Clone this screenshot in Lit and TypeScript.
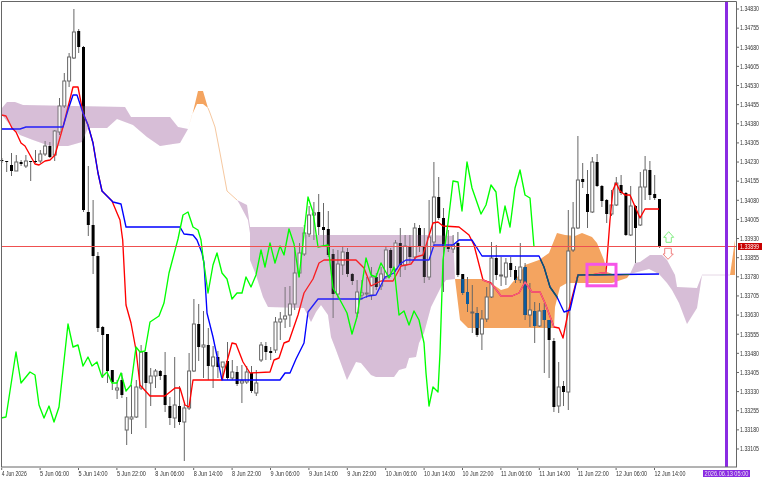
import { LitElement, html, svg, css } from "lit";
import { customElement } from "lit/decorators.js";

type C = [number, number, number, number, number];
const candles: C[] = [
[158,160,161,163,0],[161,161,162,172,0],[153,165,171,176,0],[155,162,171,171,1],[160,162,164,166,0],[155,161,166,168,1],[161,161,162,181,0],[150,161,162,163,0],
[150,154,161,163,1],[141,146,154,156,1],[142,146,157,158,0],[130,131,155,161,1],[98,106,132,135,1],[73,81,106,108,1],[53,57,81,87,1],[9,32,58,59,1],
[29,31,47,53,0],[46,47,210,212,0],[166,212,225,236,0],[200,225,256,274,0],[252,256,328,332,0],[326,327,335,378,0],[334,334,371,383,0],[370,370,382,390,0],
[380,388,390,399,1],[373,380,395,398,0],[397,417,430,445,1],[385,417,419,434,1],[380,387,417,418,1],[345,352,388,390,1],[352,352,383,428,0],[368,376,383,406,1],
[369,371,376,388,1],[370,371,376,380,0],[352,375,405,412,0],[397,406,418,425,0],[357,405,418,428,1],[386,406,422,425,0],[404,408,422,461,1],[353,371,408,410,1],
[299,324,371,372,1],[304,324,347,361,0],[311,345,347,378,1],[328,345,366,380,0],[346,357,366,388,1],[351,357,367,378,0],[362,362,367,380,1],[342,361,378,380,0],
[360,372,378,380,1],[366,372,384,386,0],[365,381,383,403,1],[366,372,382,384,1],[366,373,391,393,0],[370,383,393,396,1],[342,345,360,362,1],[342,346,352,360,0],
[347,351,353,360,0],[317,322,350,353,1],[312,319,322,340,1],[287,316,319,328,1],[286,304,315,327,1],[248,273,304,310,1],[243,253,273,277,1],[225,233,254,256,1],
[206,215,234,237,1],[202,213,215,240,1],[194,212,227,235,0],[203,227,230,247,0],[211,229,255,257,0],[249,254,294,318,0],[250,264,294,298,1],[246,252,265,275,1],
[248,252,274,277,0],[273,274,281,285,0],[280,292,313,317,1],[280,293,295,300,1],[277,293,294,298,1],[267,277,295,300,1],[273,277,287,290,0],[267,274,286,290,1],
[246,250,277,279,1],[248,250,268,277,0],[240,243,269,272,1],[228,243,265,277,0],[235,246,265,270,1],[235,246,257,263,0],[223,228,257,260,1],[225,228,246,252,0],
[228,246,277,283,0],[200,237,277,280,1],[162,197,242,245,1],[177,197,218,220,0],[208,218,246,292,0],[230,246,249,252,0],[235,245,249,253,1],[232,243,275,277,0],
[274,274,293,295,0],[277,292,304,312,0],[285,312,313,333,1],[307,313,335,337,0],[310,319,334,350,1],[287,297,319,322,1],[242,258,297,298,1],[245,258,275,280,0],
[257,275,276,286,1],[258,263,277,285,1],[257,263,270,277,0],[266,270,280,283,0],[243,267,280,283,1],[263,267,315,320,0],[283,310,315,327,1],[302,311,326,343,0],
[303,311,326,327,1],[303,310,320,373,0],[320,320,340,378,0],[338,341,407,412,0],[362,387,406,413,1],[381,386,392,406,0],[210,251,392,410,1],[202,228,250,252,1],
[136,180,228,229,1],[163,179,182,188,0],[170,194,212,228,0],[157,162,212,213,1],[154,162,186,187,0],[185,186,201,207,0],[199,200,214,223,0],[190,205,214,216,1],
[177,183,205,206,1],[175,185,193,195,0],[192,193,235,236,0],[186,206,235,236,1],[205,206,228,263,0],[172,187,225,226,1],[156,170,187,200,1],[161,170,195,200,0],
[175,194,198,200,0],[199,199,247,248,0],
];
const pts = (a: number[][]) => a.map((p) => p.join(",")).join(" ");
const red = [[1.7,115],[6,116],[12,128],[16,132],[21,143],[25,146],[30,155],[35,164],[39,165],[45,161],[50,160],[55,155],[63,127],[68,107],[73,87],[78,87],[83,113],[88,125],[93,143],[98,173],[102,191],[112,201],[117,213],[120,220],[122.7,240],[126,305],[131,323],[136,350],[140,385],[150,396],[165,396],[175,388],[180,388],[185,405],[189,407],[193,380],[222,380],[232,343],[236,344],[243,362],[250,373],[270,372],[274,360],[279,358],[284,343],[289,341],[298,315],[304,293],[313,279],[319,263],[324,260],[356,260],[364,268],[371,286],[381,281],[393,281],[401,266],[411,264],[416,257],[423,255],[433,223],[438,222],[443,226],[459,227],[469,235],[474,245],[483,280],[491,283],[501,296],[512,296],[519,293],[525,282],[532,292],[540,292],[545,303],[554,327],[559,328],[563,338],[568,313],[578,275],[592,275],[602,273],[606,273],[610,220],[613,190],[616,183],[620,191],[625,195],[630,195],[640,218],[645,209],[659,209]];
const blue = [[1.7,129],[20,129],[26,127],[63,127],[68,110],[73,95],[77,95],[83,113],[88,125],[93,143],[98,173],[102,191],[113,202],[121,204],[126,227],[180,227],[184,234],[193,235],[197,240],[202,253],[204,263],[207,313],[213,337],[222,380],[280,380],[285,373],[290,373],[296,359],[304,343],[308,312],[318,299],[361,299],[368,296],[376,295],[385,277],[394,273],[400,264],[406,260],[429,260],[434,245],[453,245],[459,240],[472,240],[482,256],[539,256],[544,267],[550,287],[557,297],[564,312],[570,310],[578,275],[659,274]];
const green = [[1,418],[6,417],[16,352],[21,383],[30,372],[35,375],[39,405],[44,418],[49,406],[54,422],[59,407],[68,324],[73,347],[78,345],[83,366],[88,357],[92,366],[97,362],[102,377],[107,372],[112,383],[117,383],[121,373],[126,391],[131,385],[136,347],[140,352],[145,351],[150,322],[159,316],[164,303],[169,273],[178,239],[183,215],[188,212],[193,227],[198,230],[201,240],[203,257],[208,293],[213,265],[217,253],[222,273],[227,279],[232,299],[237,293],[242,293],[246,277],[251,287],[256,275],[261,250],[265,267],[270,243],[275,263],[280,246],[284,255],[289,229],[294,244],[299,277],[303,243],[308,197],[313,212],[318,247],[328,245],[333,288],[339,298],[347,313],[352,334],[357,317],[366,258],[371,275],[376,277],[381,263],[389,278],[394,267],[399,315],[404,311],[409,325],[414,311],[419,320],[424,343],[426,373],[429,406],[433,387],[438,392],[440,353],[443,260],[448,223],[453,181],[458,182],[462,211],[467,162],[472,188],[481,214],[486,205],[491,185],[496,192],[500,233],[505,206],[510,227],[515,188],[520,170],[525,195],[530,198],[534,247]];
const purple = [
[[2,108],[7,102],[15,102],[23,105],[125,107],[131,117],[170,117],[178,127],[188,129],[180,143],[173,144],[160,146],[147,137],[133,125],[117,119],[107,128],[88,128],[82,142],[68,146],[50,146],[33,140],[20,135],[10,125],[2,115]],
[[237,200],[247,205],[250,227],[303,227],[306,235],[429,235],[453,236],[455,279],[446,280],[441,287],[431,307],[424,333],[419,343],[416,357],[409,358],[406,368],[399,370],[394,377],[376,377],[371,375],[361,363],[356,362],[347,380],[336,350],[331,337],[328,315],[321,305],[316,312],[311,322],[304,308],[268,307],[263,297],[256,275],[250,260],[250,233],[248,220],[239,203]],
[[630,274],[635,263],[640,262],[650,255],[662,255],[667,260],[675,275],[677,287],[697,288],[702,275],[697,308],[687,324],[679,303],[672,290],[667,283],[659,274],[649,269]],
];
const orange = [
[[188,129],[193,112],[198,91],[203,91],[208,108],[203,104],[197,104],[192,115]],
[[455,279],[483,279],[491,283],[501,290],[508,288],[512,283],[519,275],[525,265],[539,260],[549,253],[557,233],[565,235],[575,236],[582,233],[592,237],[597,243],[604,260],[607,272],[615,275],[625,274],[630,274],[627,278],[612,283],[567,283],[560,287],[555,307],[554,328],[468,328],[460,320]],
[[730,275],[735,275],[735,240]],
];
const faded = [[208,108],[210,113],[215,127],[220,153],[227,191],[237,200]];
const fadedP = [[702,275],[730,275]];
const cx = (i: number) => 1.9 + 4.8 * i;
const prices = Array.from({ length: 24 }, (_, k) => ({ t: ((134830 - 75 * k) / 100000).toFixed(5), y: 9 + 19.13 * k }));
const times = ["4 Jun 2026","5 Jun 06:00","5 Jun 14:00","5 Jun 22:00","8 Jun 06:00","8 Jun 14:00","8 Jun 22:00","9 Jun 06:00","9 Jun 14:00","9 Jun 22:00","10 Jun 06:00","10 Jun 14:00","10 Jun 22:00","11 Jun 06:00","11 Jun 14:00","11 Jun 22:00","12 Jun 06:00","12 Jun 14:00"];

@customElement("app-root")
export class AppRoot extends LitElement {
  static styles = css`
    :host { display: block; width: 768px; height: 480px; background: #fff; overflow: hidden; }
    .stage { display: grid; grid-template-columns: 737px 31px; grid-template-rows: 468px 12px; width: 768px; height: 480px; background: #fff; filter: blur(0.22px); }
    svg { display: block; }
    .time { grid-column: 1 / 3; }
    text { font-family: "Liberation Sans", Arial, sans-serif; font-size: 6.5px; fill: #333; }
    .frame { stroke: #666; stroke-width: 1; fill: none; }
    .cloud { fill: #d8bfd8; }
    .cloud-over { fill: #d8bfd8; opacity: 0.17; }
    .cloud-o { fill: #f4a460; }
    .thin-o { fill: none; stroke: #f6c8a0; stroke-width: 1; }
    .thin-p { fill: none; stroke: #e6d8e6; stroke-width: 1; }
    .wick { stroke: #666; stroke-width: 1; }
    .bear { fill: #000; }
    .bear-o { fill: #0b5b9f; }
    .bull { fill: #fff; stroke: #666; stroke-width: 1; }
    .line { fill: none; stroke-width: 1.35; stroke-linejoin: round; }
    .red { stroke: #ff0000; } .blue { stroke: #0000ff; } .green { stroke: #00ff00; }
    .pink { stroke: #f0608c; } .teal { stroke: #0b5b60; }
    .price { stroke: #ef5050; stroke-width: 1; }
    .vbar { fill: #8a2be2; }
    .mark { fill: none; stroke: #f555e8; stroke-width: 3; }
    .up { fill: #fff; stroke: #80ee80; stroke-width: 1; }
    .down { fill: #fff; stroke: #f08080; stroke-width: 1; }
    .tag { fill: #c80000; }
    .tag-t { fill: #fff; }
    .vtag { fill: #8a2be2; }
    .vtag-t { fill: #e8e0f0; }
  `;

  private bodies(kind: "all" | "bear") {
    return candles.map((c, i) => {
      const x = cx(i), h = Math.max(c[2] - c[1], 1);
      if (kind === "bear")
        return c[4] ? null : svg`<rect class="bear-o" x=${x - 1.5} y=${c[1]} width="3" height=${h}></rect>`;
      return svg`<line class="wick" x1=${x} x2=${x} y1=${c[0]} y2=${c[3]}></line>${c[4]
        ? svg`<rect class="bull" x=${x - 1.5} y=${c[1]} width="3" height=${h}></rect>`
        : svg`<rect class="bear" x=${x - 1.5} y=${c[1]} width="3" height=${h}></rect>`}`;
    });
  }

  render() {
    return html`<div class="stage">
      <svg width="737" height="468" viewBox="0 0 737 468">
        <defs><clipPath id="oc"><polygon points=${pts(orange[1])}></polygon></clipPath></defs>
        ${purple.map((p) => svg`<polygon class="cloud" points=${pts(p)}></polygon>`)}
        ${orange.map((p) => svg`<polygon class="cloud-o" points=${pts(p)}></polygon>`)}
        <polyline class="thin-o" points=${pts(faded)}></polyline>
        <polyline class="thin-p" points=${pts(fadedP)}></polyline>
        ${this.bodies("all")}
        <g clip-path="url(#oc)">${this.bodies("bear")}</g>
        <polyline class="line red" points=${pts(red)}></polyline>
        <polyline class="line blue" points=${pts(blue)}></polyline>
        <g clip-path="url(#oc)">
          <polyline class="line pink" points=${pts(red)}></polyline>
          <polyline class="line teal" points=${pts(blue)}></polyline>
        </g>
        ${purple.map((p) => svg`<polygon class="cloud-over" points=${pts(p)}></polygon>`)}
        <polyline class="line green" points=${pts(green)}></polyline>
        <line class="price" x1="1" x2="736" y1="246.5" y2="246.5"></line>
        <rect class="mark" x="587" y="264.3" width="29" height="21.5"></rect>
        <polygon class="up" points="668.7,231.7 663.7,237.3 666,237.3 666,242.3 671.3,242.3 671.3,237.3 673.7,237.3"></polygon>
        <polygon class="down" points="664.7,248.3 671.3,248.3 671.3,254 673.3,254 668,259.3 663,254 664.7,254"></polygon>
        <rect class="vbar" x="725" y="1" width="3" height="466"></rect>
        <path class="frame" d="M1.5 467V1.5H736.5V467M1 467H737"></path>
      </svg>
      <svg width="31" height="468" viewBox="737 0 31 468">
        ${prices.map((p) => svg`<line class="frame" x1="736" x2="739" y1=${p.y} y2=${p.y}></line>
          <text x="740" y=${p.y + 2.3} textLength="19" lengthAdjust="spacingAndGlyphs">${p.t}</text>`)}
        <rect class="tag" x="738" y="243" width="24" height="7"></rect>
        <text class="tag-t" x="740" y="248.8" textLength="19" lengthAdjust="spacingAndGlyphs">1.33899</text>
      </svg>
      <svg class="time" width="768" height="12" viewBox="0 468 768 12">
        ${times.map((t, k) => {
          const x = 1.7 + 38.4 * k;
          return svg`<line class="frame" x1=${x} x2=${x} y1="467" y2="470"></line>
            <text x=${x} y="475.8" textLength=${t.length > 11 ? 31 : t.length === 11 ? 29 : 25} lengthAdjust="spacingAndGlyphs">${t}</text>`;
        })}
        <rect class="vtag" x="703" y="470" width="47" height="7"></rect>
        <text class="vtag-t" x="704.5" y="475.8" textLength="44" lengthAdjust="spacingAndGlyphs">2026.06.13 05:00</text>
      </svg>
    </div>`;
  }
}
